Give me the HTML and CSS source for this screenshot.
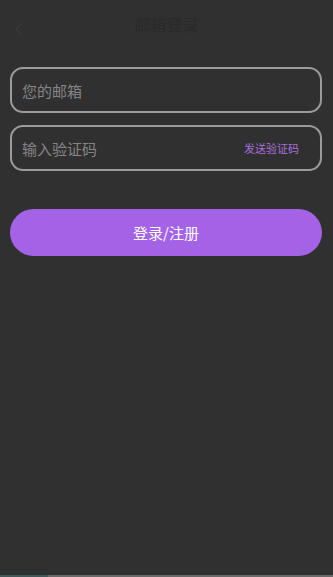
FILE: index.html
```html
<!DOCTYPE html>
<html lang="zh">
  <head>
    <meta http-equiv="Content-Type" content="text/html; charset=utf-8" />
    <meta name="viewport" content="width=device-width, initial-scale=1.0,user-scalable=no" />
    <title>邮箱登录</title>
    <link rel="stylesheet" href="styles.css">
  </head>
  <body>
    <div class="page">
      <div class="header">
        <span class="back">
          <svg width="10" height="14" viewBox="0 0 10 14"><path d="M8 1 L2 7 L8 13" fill="none" stroke="#393939" stroke-width="1.6"/></svg>
        </span>
        <span class="title">邮箱登录</span>
      </div>
      <div class="form">
        <div class="field">
          <span class="placeholder">您的邮箱</span>
        </div>
        <div class="field">
          <span class="placeholder">输入验证码</span>
          <span class="send">发送验证码</span>
        </div>
        <button type="button" class="button">登录/注册</button>
      </div>
    </div>
    <div class="bottom-bar"><span class="bottom-tab"></span></div>
  </body>
</html>
```

FILE: styles.css
```css
html,
body {
  margin: 0;
  padding: 0;
  height: 100%;
}
body {
  background-color: #303030;
  font-family: "Noto Sans CJK SC", "Noto Sans", sans-serif;
  display: flex;
  flex-direction: column;
}
.page {
  flex-grow: 1;
}
.header {
  height: 48px;
  display: flex;
  align-items: center;
  justify-content: center;
  position: relative;
}
.back {
  position: absolute;
  left: 14px;
  top: 17px;
}
.title {
  color: #2a2a2a;
  font-size: 16px;
}
.form {
  padding: 19px 11px 0 10px;
}
.field {
  box-sizing: border-box;
  height: 46px;
  border: 2px solid #9b9b9b;
  border-radius: 13px;
  display: flex;
  align-items: center;
  justify-content: space-between;
  padding: 0 21px 0 10px;
  margin-bottom: 12px;
}
.placeholder {
  color: #858585;
  font-size: 15px;
}
.send {
  color: #a86fdc;
  font-size: 11px;
}
/* sibling margins collapse, so this one wins over the field's */
.button {
  display: block;
  width: 100%;
  height: 47px;
  margin-top: 38px;
  border: none;
  border-radius: 24px;
  background-color: #a463e6;
  color: white;
  font-family: "Noto Sans CJK SC", "Noto Sans", sans-serif;
  font-size: 15px;
  cursor: pointer;
}
.bottom-bar {
  height: 2px;
  background-color: #6a6a6a;
  display: flex;
}
.bottom-tab {
  width: 48px;
  background-color: #3e5a5a;
}
```
